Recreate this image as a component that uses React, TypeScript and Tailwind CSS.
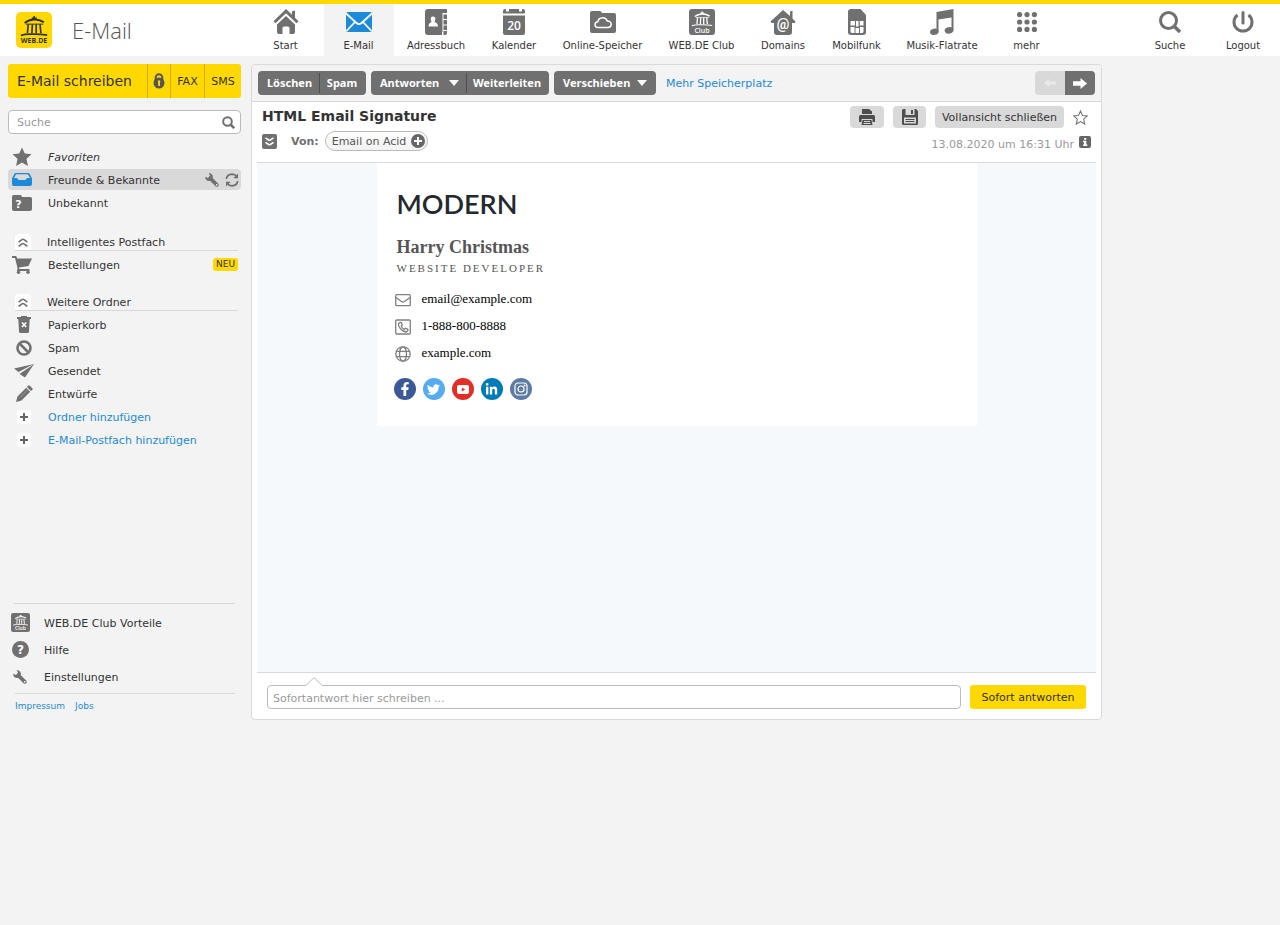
import type { ReactNode } from "react";
import { FaFacebookF, FaTwitter, FaLinkedinIn } from "react-icons/fa";

const svgBase = { xmlns: "http://www.w3.org/2000/svg", "aria-hidden": true } as const;

function Gate({ color = "#fff" }: { color?: string }) {
  return (
    <g stroke={color} fill="none">
      <path d="M3.500 8.200Q7 5.200 12 5t9 2.600" strokeWidth="1.800" />
      <path d="M10 4h4.500M12.200 2v2" strokeWidth="1.500" />
      <path d="M4.500 9.300h16" strokeWidth=".9" />
      <path d="M6.800 9.500l-.8 8M10.500 9.500l-.4 8M14 9.500v8M17.500 9.500l.8 8" strokeWidth="1.500" />
      <path d="M0 19.600c4-1.500 7-1.200 10-1.200s8-.2 14 .9" strokeWidth="1.400" />
    </g>
  );
}

function WebDeLogo() {
  return (
    <span className="flex size-9 flex-col items-center rounded-[5px] bg-[#ffd800] pt-[3px] text-[#333]">
      <svg {...svgBase} viewBox="0 1 24 20" className="h-[22px] w-[28px]">
        <Gate color="#333" />
      </svg>
      <span className="font-['Open_Sans','Noto_Sans',sans-serif] text-[7px] leading-[8px] font-bold">WEB.DE</span>
    </span>
  );
}

function ClubIcon({ className }: { className: string }) {
  return (
    <svg {...svgBase} viewBox="0 0 26 26" className={className}>
      <rect width="26" height="26" rx="3" fill="#707070" />
      <g transform="translate(2.800 1) scale(.85 .8)">
        <Gate />
      </g>
      <text x="13" y="23.500" fontSize="7" fontWeight="600" textAnchor="middle" fill="#fff" fontFamily="Open Sans, sans-serif">Club</text>
    </svg>
  );
}

const HomeIcon = () => (
  <svg {...svgBase} viewBox="0 0 26 26" className="size-[26px]" fill="#707070">
    <path d="M13 0 .5 12.200l2 2L13 4.200l10.500 10 2-2-3.500-3.500V1.500l-3 .8v3.500z" />
    <path d="M13 7 4 15.500V23q0 2 2 2h3.500v-6q0-1.500 1.500-1.500h4q1.500 0 1.500 1.500v6H20q2 0 2-2v-7.500z" />
  </svg>
);
const MailIcon = () => (
  <svg {...svgBase} viewBox="0 0 26 20" className="h-[20px] w-[26px]">
    <rect width="26" height="20" rx="2" fill="#1c8ad9" />
    <path d="M0 1.500 10.500 11q2.500 2.200 5 0L26 1.500M.5 19l8.500-9M25.500 19 17 10" stroke="#fff" strokeWidth="1.800" fill="none" />
  </svg>
);
const BookIcon = () => (
  <svg {...svgBase} viewBox="0 0 22 26" className="h-[26px] w-[22px]" fill="#707070">
    <path d="M3 0h18q1 0 1 1v3h-4.500v19H17V26H3q-3 0-3-3V3q0-3 3-3z" />
    <path d="M18.500 5.500H22V10h-3.500zM18.500 11H22v4.500h-3.500zM18.500 16.500H22V21h-3.500zM18.500 22H22v2q0 2-2 2h-1.500z" />
    <path fill="#fff" d="M8 7.500a2.300 2.300 0 0 1 2.300 2.500q-.1 2.500-1 3 3.500.7 3.700 4.500H3.500q.2-3.800 3.300-4.500-1-.5-1.100-3A2.300 2.300 0 0 1 8 7.500z" />
  </svg>
);
const CalendarIcon = () => (
  <svg {...svgBase} viewBox="0 0 22 26" className="h-[26px] w-[22px]">
    <path fill="#707070" d="M0 4.500V2q0-2 2-2h1v2.500h3V0h10v2.500h3V0h1q2 0 2 2v2.500zM0 6.500h22V24q0 2-2 2H2q-2 0-2-2z" />
    <text x="11" y="21" fontSize="12" fontWeight="600" textAnchor="middle" fill="#fff" fontFamily="Open Sans, sans-serif">20</text>
  </svg>
);
const CloudIcon = () => (
  <svg {...svgBase} viewBox="0 0 26 22" className="h-[22px] w-[26px]">
    <path fill="#707070" d="M2 0h8q1.200 0 2 2H24q2 0 2 2v16q0 2-2 2H2q-2 0-2-2V2Q0 0 2 0z" />
    <path stroke="#fff" strokeWidth="1.500" fill="none" d="M8 16.500q-3.200-.2-3-3 .3-2.500 2.800-2.700Q8.500 7 12.500 6.700q3.600-.1 4.800 3.400 3.800.2 3.900 3.300-.1 2.900-3.200 3.100z" />
  </svg>
);
const DomainIcon = () => (
  <svg {...svgBase} viewBox="0 0 26 26" className="size-[26px]">
    <path fill="#707070" d="M13 1 .5 12.500l1 1.500H4v9q0 3 3 3h12q3 0 3-3v-9h2.500l1-1.500-3-3V1.800L20 2.500V7z" />
    <text x="13" y="20" fontSize="14" textAnchor="middle" fill="#fff" fontWeight="600" fontFamily="Roboto, sans-serif">@</text>
  </svg>
);
const SimIcon = () => (
  <svg {...svgBase} viewBox="0 0 18 26" className="h-[26px] w-[18px]">
    <path fill="#707070" d="M3 0h9.500L18 6v17q0 3-3 3H3q-3 0-3-3V3q0-3 3-3z" />
    <path fill="#fff" d="M2.500 12H7v4.500H2.500zM8 12h2.500v5.500H8zM11.800 12h3.700v4.500h-3.700zM2.500 18h4v6h-3l-1-1zM7.500 19H11v5H7.500zM12 18h3.500v5l-1 1H12z" />
  </svg>
);
const MusicIcon = () => (
  <svg {...svgBase} viewBox="0 0 24 26" className="h-[26px] w-[24px]" fill="#707070">
    <path d="M6.500 3 23.500 0v21.500h-2V8.500L8.500 10.500V23h-2z" />
    <ellipse cx="4.300" cy="22.800" rx="4.300" ry="3.100" transform="rotate(-12 4.300 22.800)" />
    <ellipse cx="19" cy="21.300" rx="4.400" ry="3.200" transform="rotate(-12 19 21.300)" />
  </svg>
);
const GridIcon = () => (
  <svg {...svgBase} viewBox="0 0 20 20" className="size-[20px]" fill="#707070">
    {[2.6, 10, 17.4].map((y) => [2.6, 10, 17.4].map((x) => <circle key={`${x}-${y}`} cx={x} cy={y} r="2.600" />))}
  </svg>
);
const SearchIcon = () => (
  <svg {...svgBase} viewBox="0 0 22 22" className="size-[22px]" fill="none" stroke="#707070" strokeWidth="3">
    <circle cx="9.500" cy="9.500" r="8" />
    <path d="m15 15 6 6" strokeWidth="3.500" />
  </svg>
);
const PowerIcon = () => (
  <svg {...svgBase} viewBox="0 0 22 22" className="size-[22px]" fill="none" stroke="#707070" strokeWidth="3">
    <path d="M5.500 4a9 9 0 1 0 11 0" />
    <path d="M11 1.500v10.500" strokeLinecap="round" />
  </svg>
);

type NavEntry = { label: string; width: string; icon: ReactNode; active?: boolean };

const mainNav: NavEntry[] = [
  { label: "Start", width: "w-[76px]", icon: <HomeIcon /> },
  { label: "E-Mail", width: "w-[70px]", icon: <MailIcon />, active: true },
  { label: "Adressbuch", width: "w-[85px]", icon: <BookIcon /> },
  { label: "Kalender", width: "w-[71px]", icon: <CalendarIcon /> },
  { label: "Online-Speicher", width: "w-[106px]", icon: <CloudIcon /> },
  { label: "WEB.DE Club", width: "w-[92px]", icon: <ClubIcon className="size-[26px]" /> },
  { label: "Domains", width: "w-[71px]", icon: <DomainIcon /> },
  { label: "Mobilfunk", width: "w-[76px]", icon: <SimIcon /> },
  { label: "Musik-Flatrate", width: "w-[95px]", icon: <MusicIcon /> },
  { label: "mehr", width: "w-[74px]", icon: <GridIcon /> },
];
const sideNav: NavEntry[] = [
  { label: "Suche", width: "w-[73px]", icon: <SearchIcon /> },
  { label: "Logout", width: "w-[73px]", icon: <PowerIcon /> },
];

function NavLink({ entry }: { entry: NavEntry }) {
  return (
    <a
      href="#"
      className={`flex h-[52px] shrink-0 flex-col items-center gap-[3px] pt-1 pr-px text-[10px] leading-4 whitespace-nowrap ${entry.width} ${entry.active ? "bg-[#f3f3f3]" : ""}`}
    >
      <span className="flex h-[27px] items-center">{entry.icon}</span>
      {entry.label}
    </a>
  );
}

function Header() {
  return (
    <header className="flex h-14 border-t-4 border-[#ffd800] bg-white">
      <a href="#" className="flex w-[248px] shrink-0 items-center pl-4 text-[#555]">
        <WebDeLogo />
        <span className="ml-5 font-['Open_Sans','Noto_Sans',sans-serif] text-[22px] leading-8 font-light">E-Mail</span>
      </a>
      <nav className="flex">
        {mainNav.map((e) => (
          <NavLink key={e.label} entry={e} />
        ))}
      </nav>
      <div className="ml-auto flex">
        {sideNav.map((e) => (
          <NavLink key={e.label} entry={e} />
        ))}
      </div>
    </header>
  );
}

const StarIcon = () => (
  <svg {...svgBase} viewBox="0 0 20 20" className="size-5" fill="#707070">
    <path d="m10 .5 2.800 6 6.700.8-5 4.500 1.400 7.200L10 15.500 4.100 19l1.400-7.200-5-4.500 6.700-.8z" />
  </svg>
);
const InboxIcon = () => (
  <svg {...svgBase} viewBox="0 0 20 13" className="h-[13px] w-5">
    <path fill="#1c8ad9" d="M4 0h12q1.200 0 1.700 1L20 5.500V11q0 2-2 2H2q-2 0-2-2V5.500L2.300 1Q2.800 0 4 0z" />
    <path fill="#d9d9d9" d="M4.200 1.200h11.600l2.300 3.800H15Q14.500 7 12.500 7h-5Q5.500 7 5 5H1.900z" />
  </svg>
);
const UnknownFolderIcon = () => (
  <svg {...svgBase} viewBox="0 0 20 16" className="h-[16px] w-5">
    <path fill="#707070" d="M1.500 0h7q1 0 1.500 2h8.500q1.500 0 1.500 1.500V14q0 2-2 2H2q-2 0-2-2V1.500Q0 0 1.500 0z" />
    <text x="6.500" y="13" fontSize="11" fontWeight="700" textAnchor="middle" fill="#fff" fontFamily="DejaVu Sans, sans-serif">?</text>
  </svg>
);
const CartIcon = () => (
  <svg {...svgBase} viewBox="0 0 20 18" className="h-[18px] w-5" fill="#707070">
    <path d="M0 0h4.200L5.200 2.500H20L16.500 10 7 11.500l.3 1.500h10.200v2H5L5.500 12 3 2H0z" />
    <circle cx="6.500" cy="16.300" r="1.700" />
    <circle cx="16" cy="16.300" r="1.700" />
  </svg>
);
const TrashIcon = () => (
  <svg {...svgBase} viewBox="0 0 14 17" className="h-[17px] w-[14px]">
    <path fill="#707070" d="M0 1h4V0h6v1h4v2H0zM1.300 3h11.400L12 15.500q-.2 1.500-1.500 1.500h-7Q2.200 17 2 15.500z" />
    <path d="m5 6.500 4.200 4.500M9.200 6.500 5 11" stroke="#fff" strokeWidth="1.700" />
  </svg>
);
const BanIcon = () => (
  <svg {...svgBase} viewBox="0 0 16 16" className="size-4" fill="none" stroke="#707070" strokeWidth="2.600">
    <circle cx="8" cy="8" r="6.500" />
    <path d="m3.500 3.500 9 9" />
  </svg>
);
const PlaneIcon = () => (
  <svg {...svgBase} viewBox="0 0 20 14" className="h-[14px] w-5" fill="#707070">
    <path d="M0 4.500 20 0 4.500 8zM20 0 11 13.500 5.500 10z" />
    <path d="M17.500 1.500 4.800 9" stroke="#f3f3f3" strokeWidth=".5" />
  </svg>
);
const PencilIcon = () => (
  <svg {...svgBase} viewBox="0 0 17 17" className="size-[17px]" fill="#707070">
    <path d="M0 17l1.500-5.500 8.700-8.700 4 4L5.500 15.500zM11 2l2-2 4 4-2 2z" />
    <path d="m4 12.500 8-8" stroke="#a5a5a5" strokeWidth=".8" />
  </svg>
);
const PlusIcon = () => (
  <span className="flex size-[14px] items-center justify-center rounded-[2px] bg-white">
    <svg {...svgBase} viewBox="0 0 8 8" className="size-2" stroke="#666" strokeWidth="2">
      <path d="M4 0v8M0 4h8" />
    </svg>
  </span>
);
const WrenchIcon = () => (
  <svg {...svgBase} viewBox="0 0 14 14" className="size-[14px]">
    <path d="M4 0 3.700 0 5 2.500 3 5 .3 3.800Q0 6.500 2 7.500q1.500.8 3 .2l5.500 5.500q1.300 1.200 2.600 0t0-2.600L7.600 5Q8.300 3 7 1.500 5.700.1 4 0z" fill="#707070" />
    <circle cx="11.700" cy="11.800" r=".9" fill="#f2f2f2" />
  </svg>
);
const RefreshIcon = () => (
  <svg {...svgBase} viewBox="0 0 14 14" className="size-[14px]" fill="none" stroke="#707070" strokeWidth="1.700">
    <path d="M1.300 6Q2 1.500 7 1.200q3 0 4.700 2.600M12.700 8Q12 12.500 7 12.800q-3 0-4.700-2.600" />
    <path d="M13 .5v4.800H8.300zM1 13.500V8.700h4.700z" fill="#707070" stroke="none" />
  </svg>
);

function Folder({ icon, label, tone = "text-[#333]", children }: { icon: ReactNode; label: string; tone?: string; children?: ReactNode }) {
  const selected = label === "Freunde & Bekannte";
  return (
    <li className={`flex h-[21px] items-center rounded-[4px] ${tone} ${selected ? "bg-[#d9d9d9]" : ""}`}>
      <a href="#" className={`flex flex-1 items-center whitespace-nowrap ${label === "Favoriten" ? "italic" : ""}`}>
        <span className="flex w-10 justify-start pl-1">{icon}</span>
        <span className="pt-[2px]">{label}</span>
      </a>
      {children}
    </li>
  );
}

function SectionHead({ label }: { label: string }) {
  return (
    <button className="ml-[7px] flex h-[17px] w-[223px] items-center border-b border-[#d9d9d9] text-left">
      <span className="flex h-4 w-4 items-center justify-center rounded-t-[4px] bg-white">
        <svg {...svgBase} viewBox="0 0 10 9" className="h-[9px] w-[10px]" fill="none" stroke="#707070" strokeWidth="1.600">
          <path d="M.6 4.200 4 1.600q1-.7 2 0l3.400 2.600M.6 8.400 4 5.800q1-.7 2 0l3.400 2.600" />
        </svg>
      </span>
      <span className="ml-4 pt-[2px]">{label}</span>
    </button>
  );
}

const Indent = ({ children }: { children: ReactNode }) => <span className="flex w-6 justify-center">{children}</span>;

function FooterLink({ icon, label }: { icon: ReactNode; label: string }) {
  return (
    <li>
      <a href="#" className="flex h-[27px] items-center">
        <span className="flex w-6 justify-center">{icon}</span>
        <span className="ml-3 pt-[2px]">{label}</span>
      </a>
    </li>
  );
}

function Sidebar() {
  return (
    <aside className="w-[251px] shrink-0 pt-2 pr-[10px] pl-2">
      <div className="flex h-[34px] divide-x divide-[#cfae00] overflow-hidden rounded-[3px] bg-[#ffd800]">
        <button className="flex-1 pl-[9px] text-left text-[14px] whitespace-nowrap">E-Mail schreiben</button>
        <button aria-label="Verschlüsselt schreiben" className="flex w-[23px] items-center justify-center">
          <svg {...svgBase} viewBox="0 0 12 16" className="h-4 w-3">
            <path d="M2.700 7V4.500a3.300 3.300 0 0 1 6.600 0V7" fill="none" stroke="#555" strokeWidth="2" />
            <circle cx="6" cy="10" r="5.500" fill="#555" />
            <path d="M6 7.200a1.500 1.500 0 0 1 1 2.500V13H5.200V9.700A1.500 1.500 0 0 1 6 7.200z" fill="#ffd800" />
          </svg>
        </button>
        <button className="w-[34px] pt-[2px]">FAX</button>
        <button className="w-[36px] pt-[2px]">SMS</button>
      </div>
      <form className="mt-3 flex h-6 items-center rounded-[4px] border border-[#bbb] bg-white pr-[5px]" onSubmit={(e) => e.preventDefault()}>
        <input aria-label="Suche" placeholder="Suche" className="min-w-0 flex-1 bg-transparent pt-[2px] pl-2 outline-none placeholder:text-[#999]" />
        <button aria-label="Suchen">
          <svg {...svgBase} viewBox="0 0 13 13" className="size-[13px]" fill="none" stroke="#707070" strokeWidth="2">
            <circle cx="5.500" cy="5.500" r="4.300" />
            <path d="m8.500 8.500 3.700 3.700" strokeWidth="2.500" />
          </svg>
        </button>
      </form>
      <ul className="mt-3 flex flex-col gap-[2px]">
        <Folder icon={<StarIcon />} label="Favoriten" />
        <Folder icon={<InboxIcon />} label="Freunde & Bekannte">
          <button aria-label="Ordner bearbeiten"><WrenchIcon /></button>
          <button aria-label="Aktualisieren" className="mr-[2px] ml-[6px]"><RefreshIcon /></button>
        </Folder>
        <Folder icon={<UnknownFolderIcon />} label="Unbekannt" />
      </ul>
      <div className="mt-[21px]">
        <SectionHead label="Intelligentes Postfach" />
        <ul className="mt-[3px]">
          <Folder icon={<CartIcon />} label="Bestellungen">
            <span className="mr-[3px] h-[13px] rounded-[3px] bg-[#ffd800] px-[3px] text-[9px] leading-[13px]">NEU</span>
          </Folder>
        </ul>
      </div>
      <div className="mt-[19px]">
        <SectionHead label="Weitere Ordner" />
        <ul className="mt-[3px] flex flex-col gap-[2px]">
          <Folder icon={<Indent><TrashIcon /></Indent>} label="Papierkorb" />
          <Folder icon={<Indent><BanIcon /></Indent>} label="Spam" />
          <Folder icon={<Indent><PlaneIcon /></Indent>} label="Gesendet" />
          <Folder icon={<Indent><PencilIcon /></Indent>} label="Entwürfe" />
          <Folder icon={<Indent><PlusIcon /></Indent>} label="Ordner hinzufügen" tone="text-[#1c8ad9]" />
          <Folder icon={<Indent><PlusIcon /></Indent>} label="E-Mail-Postfach hinzufügen" tone="text-[#1c8ad9]" />
        </ul>
      </div>
      <div className="mt-[153px] mr-[6px] ml-[6px] border-t border-[#d9d9d9]" />
      <ul className="pt-[5px] pb-[3px]">
        <FooterLink icon={<ClubIcon className="size-[19px]" />} label="WEB.DE Club Vorteile" />
        <FooterLink
          icon={
            <svg {...svgBase} viewBox="0 0 18 18" className="size-[17px]">
              <circle cx="9" cy="9" r="9" fill="#707070" />
              <text x="9" y="14" fontSize="13" fontWeight="700" textAnchor="middle" fill="#fff" fontFamily="DejaVu Sans, sans-serif">?</text>
            </svg>
          }
          label="Hilfe"
        />
        <FooterLink icon={<WrenchIcon />} label="Einstellungen" />
      </ul>
      <div className="mr-[6px] ml-[7px] flex gap-[10px] border-t border-[#d9d9d9] pt-1 text-[9px] leading-4 text-[#1c8ad9]">
        <a href="#">Impressum</a>
        <a href="#">Jobs</a>
      </div>
    </aside>
  );
}

const Caret = () => (
  <svg {...svgBase} viewBox="0 0 10 6" className="h-[6px] w-[10px]" fill="#fff">
    <path d="M0 0h10L5 6z" />
  </svg>
);

const toolGroup = "flex h-6 items-center divide-x divide-[#505050] rounded-[4px] bg-[#707070] font-['Noto_Sans','Open_Sans',sans-serif] text-[11px] font-bold text-white whitespace-nowrap";

function Toolbar() {
  return (
    <div className="flex h-[37px] items-center gap-[5px] rounded-t-[4px] border-b border-[#d9d9d9] bg-[#f3f3f3] px-[6px]">
      <div className={toolGroup}>
        <button className="h-5 w-[62px] pl-[2px]">Löschen</button>
        <button className="h-5 w-[46px] pr-[2px]">Spam</button>
      </div>
      <div className={toolGroup}>
        <button className="flex h-5 w-[96px] items-center justify-between pr-[7px] pl-[9px]">Antworten <Caret /></button>
        <button className="h-5 w-[82px] pr-[2px]">Weiterleiten</button>
      </div>
      <div className={toolGroup}>
        <button className="flex h-5 w-[102px] items-center justify-between pr-[9px] pl-[9px]">Verschieben <Caret /></button>
      </div>
      <a href="#" className="ml-[5px] pt-[2px] whitespace-nowrap text-[#1c8ad9]">Mehr Speicherplatz</a>
      <div className="ml-auto flex overflow-hidden rounded-[4px]">
        <button aria-label="Vorherige E-Mail" disabled className="flex h-6 w-[30px] items-center justify-center bg-[#d9d9d9]">
          <svg {...svgBase} viewBox="0 0 14 10" className="h-[10px] w-[12px]" fill="#e8e8e8"><path d="M0 5 6 0v3h8v4H6v3z" /></svg>
        </button>
        <button aria-label="Nächste E-Mail" className="flex h-6 w-[30px] items-center justify-center bg-[#707070]">
          <svg {...svgBase} viewBox="0 0 14 11" className="h-[11px] w-[14px]" fill="#fff"><path d="m14 5.500-6.500-5.500v3.300H0v4.400h7.500V11z" /></svg>
        </button>
      </div>
    </div>
  );
}

function MessageHead() {
  return (
    <div className="flex h-[61px] justify-between border-b border-[#d9d9d9] pr-[5px] pl-[5px]">
      <div>
        <h1 className="mt-1 text-[14px] leading-5 font-bold text-[#333]">HTML Email Signature</h1>
        <div className="mt-[5px] flex h-5 items-center">
          <button aria-label="Details anzeigen" className="flex size-[15px] items-center justify-center rounded-[2px] bg-[#707070]">
            <svg {...svgBase} viewBox="0 0 9 9" className="size-[9px]" fill="none" stroke="#fff" strokeWidth="1.600">
              <path d="M.5.800 3.700 3q.8.500 1.600 0L8.500.800M.5 5.300l3.200 2.200q.8.500 1.600 0l3.200-2.200" />
            </svg>
          </button>
          <span className="ml-[14px] pt-[2px] font-bold text-[#707070]">Von:</span>
          <button className="ml-[6px] flex h-5 items-center rounded-full border border-[#bbb] bg-gradient-to-b from-white to-[#f2f2f2] pr-[2px] pl-[6px] text-[#555]">
            <span className="pt-[2px]">Email on Acid</span>
            <svg {...svgBase} viewBox="0 0 14 14" className="ml-[5px] size-[14px]">
              <circle cx="7" cy="7" r="7" fill="#666" />
              <path d="M7 3v8M3 7h8" stroke="#fff" strokeWidth="2" />
            </svg>
          </button>
        </div>
      </div>
      <div>
        <div className="mt-1 mr-[3px] flex items-center justify-end gap-[9px]">
          <button aria-label="Drucken" className="flex h-[22px] w-[34px] items-center justify-center rounded-[4px] bg-[#d9d9d9]">
            <svg {...svgBase} viewBox="0 0 16 16" className="size-4">
              <path fill="#4d4d4d" d="M3 0h7l3 2.500V5H3zM1.500 6h13Q16 6 16 7.500V13h-2.500V10h-11v3H0V7.500Q0 6 1.500 6zM3.500 11h9l1 5h-11z" />
              <path stroke="#d9d9d9" d="M5 12.500h6M4.500 14.500h7" />
            </svg>
          </button>
          <button aria-label="Speichern" className="flex h-[22px] w-[33px] items-center justify-center rounded-[4px] bg-[#d9d9d9]">
            <svg {...svgBase} viewBox="0 0 16 16" className="size-4">
              <path fill="#4d4d4d" d="M1.500 0H14l2 2v12.500q0 1.500-1.500 1.500h-13Q0 16 0 14.500v-13Q0 0 1.500 0z" />
              <path fill="#d9d9d9" d="M3.500 0h9v6h-9zM2 8.500h12v6H2z" />
              <path d="M9 1h2v4H9zM3.500 10h9v1h-9zM3.500 12h9v1h-9z" fill="#4d4d4d" />
            </svg>
          </button>
          <button className="h-[22px] w-[129px] rounded-[4px] bg-[#d9d9d9] pt-[2px] whitespace-nowrap">Vollansicht schließen</button>
          <button aria-label="Als Favorit markieren">
            <svg {...svgBase} viewBox="0 0 16 16" className="size-[15px]" fill="none" stroke="#707070" strokeWidth="1.100">
              <path d="m8 1 2.100 4.800 5.200.5-3.900 3.500 1.100 5.200L8 12.300 3.500 15l1.100-5.200L.7 6.300l5.200-.5z" />
            </svg>
          </button>
        </div>
        <div className="mt-[6px] flex h-5 items-center justify-end text-[#999]">
          <span className="pt-[2px]">13.08.2020 um 16:31 Uhr</span>
          <button aria-label="Informationen" className="mb-1 ml-[5px]">
            <svg {...svgBase} viewBox="0 0 12 12" className="size-3">
              <rect width="12" height="12" rx="2" fill="#666" />
              <path fill="#fff" d="M5 2h2.300v1.800H5zM4 4.800h3.300v3.700h1V10H4V8.500h1V6.200H4z" />
            </svg>
          </button>
        </div>
      </div>
    </div>
  );
}

const lineIcon = { ...svgBase, fill: "none", stroke: "#808080", strokeWidth: 1.3 };
const contacts = [
  {
    label: "email@example.com",
    href: "mailto:email@example.com",
    icon: (
      <svg {...lineIcon} viewBox="0 0 16 16" className="size-4">
        <rect x=".7" y="2.700" width="14.600" height="11" rx="1" />
        <path d="m1 5.500 5.500 4q1.500 1 3 0l5.500-4" />
      </svg>
    ),
  },
  {
    label: "1-888-800-8888",
    href: "tel:1-888-800-8888",
    icon: (
      <svg {...lineIcon} viewBox="0 0 16 16" className="size-4">
        <rect x=".7" y="1" width="14.600" height="14" rx="1" />
        <path d="M5 3.500 3.500 4.500q-.5 2.500 2 5.200t5.800 3.300l1.700-1.500-.3-1.200-2.200-1.100-1.200 1.100q-2.300-1-3-3.200L7.200 6 6.500 3.700z" />
      </svg>
    ),
  },
  {
    label: "example.com",
    href: "#",
    icon: (
      <svg {...lineIcon} viewBox="0 0 16 16" className="size-4">
        <circle cx="8" cy="8" r="7.200" />
        <ellipse cx="8" cy="8" rx="3.500" ry="7.200" />
        <path d="M1.500 5.300h13M1.500 10.700h13" />
      </svg>
    ),
  },
];

const social = [
  { name: "Facebook", bg: "bg-[#3b5998]", icon: <FaFacebookF className="size-[14px]" /> },
  { name: "Twitter", bg: "bg-[#55acee]", icon: <FaTwitter className="size-[13px]" /> },
  {
    name: "YouTube",
    bg: "bg-[#e52d27]",
    icon: (
      <svg {...svgBase} viewBox="0 0 12 9" className="h-[9px] w-3">
        <rect width="12" height="9" rx="2" fill="#fff" />
        <path d="M4.800 2.500v4l3.400-2z" fill="#e52d27" />
      </svg>
    ),
  },
  { name: "LinkedIn", bg: "bg-[#007bb5]", icon: <FaLinkedinIn className="size-[13px]" /> },
  {
    name: "Instagram",
    bg: "bg-[#5c7ca5]",
    icon: (
      <svg {...svgBase} viewBox="0 0 14 14" className="size-[14px]" fill="none" stroke="#fff" strokeWidth="1.200">
        <rect x="1" y="1" width="12" height="12" rx="3" />
        <circle cx="7" cy="7" r="3" />
        <circle cx="10.600" cy="3.400" r=".4" />
      </svg>
    ),
  },
];

function Signature() {
  return (
    <article className="mx-auto max-w-[600px] bg-white px-[17px] pt-[23px] pb-[26px] font-['Liberation_Serif',serif]">
      <div className="pl-[3px]">
        <h2 className="font-['Lato',sans-serif] text-[27px] leading-9 font-semibold text-[#23292d]">MODERN</h2>
        <p className="mt-[14px] text-[18px] leading-[22px] font-bold text-[#555]">Harry Christmas</p>
        <p className="text-[11px] leading-5 tracking-[2px] text-[#555]">WEBSITE DEVELOPER</p>
      </div>
      <ul className="mt-[7px] text-[13px] text-black">
        {contacts.map((c) => (
          <li key={c.label} className="flex h-[27px] items-center">
            <span className="mt-[3px] ml-[1px]">{c.icon}</span>
            <a href={c.href} className="ml-[11px]">{c.label}</a>
          </li>
        ))}
      </ul>
      <div className="mt-[12px] flex gap-[7px]">
        {social.map((s) => (
          <a key={s.name} href="#" aria-label={s.name} className={`flex size-[22px] items-center justify-center rounded-full text-white ${s.bg}`}>
            {s.icon}
          </a>
        ))}
      </div>
    </article>
  );
}

function QuickReply() {
  return (
    <form className="flex gap-[9px] px-[10px] pt-3 pb-[10px]" onSubmit={(e) => e.preventDefault()}>
      <div className="relative flex-1">
        <input aria-label="Sofortantwort" placeholder="Sofortantwort hier schreiben ..." className="block h-6 w-full rounded-[4px] border border-[#bbb] bg-white px-[5px] pt-[2px] outline-none placeholder:text-[#999]" />
        <svg {...svgBase} viewBox="0 0 18 10" className="absolute -top-[8px] left-[38px] h-[10px] w-[18px]">
          <path d="M.5 8.500 9 .7l8.500 7.800V10H.5z" fill="#fff" />
          <path d="M0 8.500h.8L9 .7l8.200 7.800h.8" fill="none" stroke="#bbb" />
        </svg>
      </div>
      <button className="h-6 w-[116px] rounded-[3px] bg-[#ffd800] pt-[2px] whitespace-nowrap">Sofort antworten</button>
    </form>
  );
}

export default function App() {
  return (
    <div className="min-h-screen bg-[#f3f3f3] font-['DejaVu_Sans',sans-serif] text-[11px] leading-4 text-[#333]">
      <Header />
      <div className="flex items-start">
        <Sidebar />
        <main className="mt-2 mr-[178px] min-w-0 flex-1 rounded-[4px] border border-[#d9d9d9] bg-white">
          <Toolbar />
          <div className="px-[5px]">
            <MessageHead />
            <div className="min-h-[510px] border-b border-[#d9d9d9] bg-[#f5f9fc]">
              <Signature />
            </div>
            <QuickReply />
          </div>
        </main>
      </div>
    </div>
  );
}
